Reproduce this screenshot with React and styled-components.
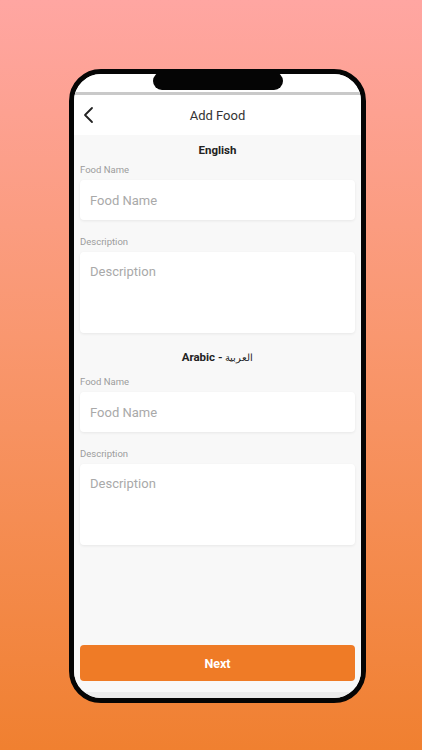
import React from 'react';
import styled, { createGlobalStyle } from 'styled-components';

const GlobalStyle = createGlobalStyle`
  html, body {
    margin: 0;
    padding: 0;
  }
  body {
    font-family: Roboto, 'Noto Sans', Arial, sans-serif;
    background: linear-gradient(180deg, #ffa6a2 0%, #f9976f 45%, #f08030 100%);
    min-height: 750px;
  }
`;

const Stage = styled.div`
  height: 750px;
  display: flex;
  justify-content: center;
  padding-top: 69px;
  box-sizing: border-box;
`;

const Phone = styled.div`
  position: relative;
  width: 297px;
  height: 634px;
  box-sizing: border-box;
  border: 5px solid #050505;
  border-radius: 32px;
  background: #ececec;
  overflow: hidden;
  display: flex;
  flex-direction: column;
  margin-left: 13px;
`;

const Notch = styled.div`
  position: absolute;
  top: -2px;
  left: 50%;
  transform: translateX(-50%);
  width: 130px;
  height: 18px;
  border-radius: 10px;
  background: #050505;
`;

const StatusBar = styled.div`
  height: 18px;
  background: #fff;
  border-bottom: 3px solid #c9c9c9;
  flex: none;
`;

const Header = styled.div`
  position: relative;
  height: 40px;
  background: #fff;
  display: flex;
  align-items: center;
  justify-content: center;
  flex: none;
`;

const BackButton = styled.button`
  position: absolute;
  left: 8px;
  top: 11px;
  padding: 0;
  border: 0;
  background: none;
  display: flex;
`;

const Title = styled.h1`
  margin: 0;
  font-size: 13px;
  font-weight: 400;
  color: #333;
`;

const Content = styled.div`
  flex: 1;
  background: #f8f8f8;
  padding: 8px 6px 11px;
  display: flex;
  flex-direction: column;
`;

const Section = styled.section`
  display: flex;
  flex-direction: column;
  margin-top: ${p => p.$top || 0}px;
`;

const SectionTitle = styled.h2`
  margin: 0 0 ${p => p.$gap}px;
  height: 14px;
  font-size: 11.5px;
  line-height: 14px;
  font-weight: 700;
  color: #222;
  text-align: center;
`;

const Native = styled.span`
  font-weight: 400;
  font-size: 10px;
  line-height: 1;
`;

const Field = styled.div`
  display: flex;
  flex-direction: column;
  margin-top: ${p => p.$top || 0}px;
`;

const Label = styled.label`
  font-size: 9.5px;
  line-height: 12px;
  color: #9c9c9c;
  margin-bottom: 4px;
`;

const fieldBase = `
  box-sizing: border-box;
  width: 100%;
  border: 0;
  border-radius: 4px;
  background: #fff;
  box-shadow: 0 1px 3px rgba(0, 0, 0, 0.07);
  font-family: Roboto, 'Noto Sans', Arial, sans-serif;
  font-size: 13px;
  color: #333;
  padding: 0 10px;
  outline: none;
  &::placeholder {
    color: #a9a9a9;
  }
`;

const TextInput = styled.input`
  ${fieldBase}
  height: 40px;
`;

const TextArea = styled.textarea`
  ${fieldBase}
  height: 81px;
  padding-top: 12px;
  resize: none;
  line-height: 16px;
`;

const Spacer = styled.div`
  flex: 1;
`;

const NextButton = styled.button`
  height: 36px;
  border: 0;
  border-radius: 4px;
  background: #ef7b26;
  color: #fff;
  font-family: Roboto, 'Noto Sans', Arial, sans-serif;
  font-size: 12.5px;
  font-weight: 700;
`;

const Bottom = styled.div`
  height: 6px;
  background: #ececec;
  flex: none;
`;

const Chevron = () => (
  <svg width="14" height="18" viewBox="0 0 14 18">
    <polyline points="10,2 3,9 10,16" fill="none" stroke="#222" strokeWidth="1.8" strokeLinecap="round" strokeLinejoin="round" />
  </svg>
);

const LangSection = ({ title, native, top, gap }) => (
  <Section $top={top}>
    <SectionTitle $gap={gap}>
      {title}
      {native && (
        <>
          {' - '}
          <Native>{native}</Native>
        </>
      )}
    </SectionTitle>
    <Field>
      <Label>Food Name</Label>
      <TextInput placeholder="Food Name" />
    </Field>
    <Field $top={16}>
      <Label>Description</Label>
      <TextArea placeholder="Description" />
    </Field>
  </Section>
);

const App = () => (
  <>
    <GlobalStyle />
    <Stage>
      <Phone>
        <Notch />
        <StatusBar />
        <Header>
          <BackButton aria-label="Back">
            <Chevron />
          </BackButton>
          <Title>Add Food</Title>
        </Header>
        <Content>
          <LangSection title="English" gap={7} />
          <LangSection title="Arabic" native="العربية" top={17} gap={12} />
          <Spacer />
          <NextButton>Next</NextButton>
        </Content>
        <Bottom />
      </Phone>
    </Stage>
  </>
);

export default App;
